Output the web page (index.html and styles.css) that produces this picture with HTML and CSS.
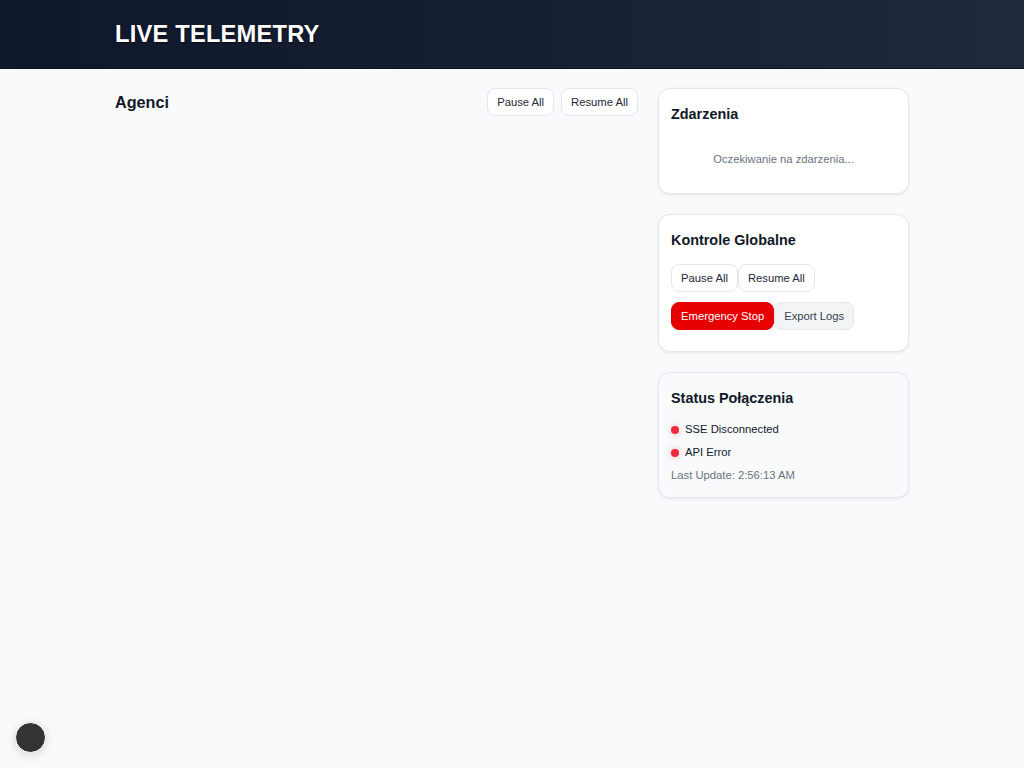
FILE: index.html
```html
<!DOCTYPE html>
<html lang="pl">
<head>
<meta charset="utf-8">
<title>Live Telemetry</title>
<link rel="stylesheet" href="styles.css">
</head>
<body>
<header class="topbar">
  <div class="container">
    <h1 class="brand">LIVE TELEMETRY</h1>
  </div>
</header>
<main class="container layout">
  <section class="agents">
    <div class="agents-head">
      <h2 class="section-title">Agenci</h2>
      <div class="btn-row spaced">
        <button class="btn">Pause All</button>
        <button class="btn">Resume All</button>
      </div>
    </div>
  </section>
  <aside class="sidebar">
    <div class="card">
      <h3 class="card-title">Zdarzenia</h3>
      <p class="empty">Oczekiwanie na zdarzenia...</p>
    </div>
    <div class="card">
      <h3 class="card-title">Kontrole Globalne</h3>
      <div class="controls">
        <div class="btn-row">
          <button class="btn">Pause All</button>
          <button class="btn">Resume All</button>
        </div>
        <div class="btn-row">
          <button class="btn btn-danger">Emergency Stop</button>
          <button class="btn btn-muted">Export Logs</button>
        </div>
      </div>
    </div>
    <div class="card card-plain">
      <h3 class="card-title">Status Połączenia</h3>
      <ul class="status-list">
        <li class="status-item"><span class="dot"></span>SSE Disconnected</li>
        <li class="status-item"><span class="dot"></span>API Error</li>
      </ul>
      <p class="last-update">Last Update: 2:56:13 AM</p>
    </div>
  </aside>
</main>
<div class="fab"></div>
</body>
</html>
```
FILE: styles.css
```css
* { box-sizing: border-box; }
html, body { margin: 0; padding: 0; }
body {
  background: #f8fafc;
  font-family: "Liberation Sans", Arial, sans-serif;
  color: #111827;
  min-height: 768px;
}
.container {
  width: 794px;
  margin: 0 auto;
}
.topbar {
  height: 69px;
  background: linear-gradient(90deg, #0f172a 0%, #1e293b 100%);
  border-bottom: 1px solid #0b1120;
  display: flex;
  align-items: center;
}
.brand {
  margin: 0;
  font-size: 23.7px;
  font-weight: 700;
  color: #ffffff;
  letter-spacing: 0.2px;
  text-shadow: 0 1px 2px rgba(0,0,0,0.5);
  line-height: 1;
  padding-top: 1px;
}
.layout {
  display: grid;
  grid-template-columns: 1fr 251px;
  gap: 20px;
  padding-top: 19px;
}
.agents-head {
  display: flex;
  justify-content: space-between;
  align-items: center;
}
.section-title {
  margin: 0;
  font-size: 16.2px;
  font-weight: 700;
  color: #111827;
}
.btn-row { display: flex; }
.btn-row.spaced { gap: 7px; }
.btn {
  font-family: "Liberation Sans", Arial, sans-serif;
  font-size: 11.25px;
  height: 28px;
  padding: 0 9px;
  border: 1px solid #e2e8f0;
  border-radius: 8px;
  background: #ffffff;
  color: #1f2937;
  cursor: pointer;
}
.btn-danger {
  background: #e60000;
  border-color: #e60000;
  color: #ffffff;
}
.btn-muted {
  background: #f3f4f6;
  border-color: #e5e7eb;
  color: #374151;
}
.sidebar {
  display: flex;
  flex-direction: column;
  gap: 20px;
}
.card {
  background: #ffffff;
  border: 1px solid #e5e7eb;
  border-radius: 12px;
  box-shadow: 0 1px 3px rgba(0,0,0,0.08);
  padding: 15px 12px 13px;
}
.card-plain { background: #f8fafc; }
.card-title {
  margin: 0;
  font-size: 14.4px;
  font-weight: 700;
  line-height: 20px;
  color: #111827;
}
.empty {
  margin: 28px 0 13px;
  text-align: center;
  font-size: 11.25px;
  line-height: 15px;
  color: #6b7280;
}
.controls {
  margin-top: 14px;
  display: flex;
  flex-direction: column;
  gap: 10px;
  padding-bottom: 8px;
}
.status-list {
  list-style: none;
  margin: 14px 0 0;
  padding: 0;
  display: flex;
  flex-direction: column;
  gap: 8px;
}
.status-item {
  display: flex;
  align-items: center;
  gap: 6px;
  font-size: 11.25px;
  line-height: 15px;
  color: #111827;
}
.dot {
  width: 8px;
  height: 8px;
  border-radius: 50%;
  background: #ef2b3b;
  box-shadow: 0 0 6px rgba(239, 43, 59, 0.35);
}
.last-update {
  margin: 8px 0 1px;
  font-size: 11.25px;
  line-height: 15px;
  color: #6b7280;
}
.fab {
  position: fixed;
  left: 15px;
  bottom: 15px;
  width: 31px;
  height: 31px;
  border-radius: 50%;
  background: #333333;
  border: 1px solid #ffffff;
  box-shadow: 0 2px 10px rgba(0,0,0,0.15);
}
```
